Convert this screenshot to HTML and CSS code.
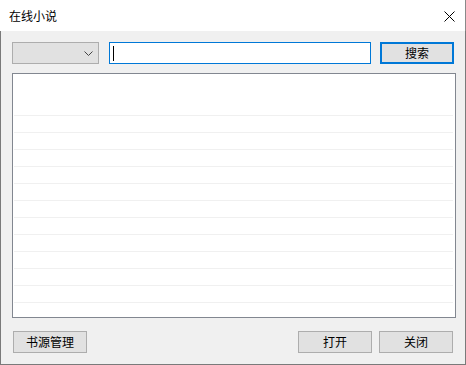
FILE: index.html
```html
<!DOCTYPE html>
<html lang="zh">
<head>
    <meta charset="UTF-8">
    <meta name="viewport" content="width=device-width, initial-scale=1.0">
    <title>在线小说</title>
    <link rel="stylesheet" href="styles.css">
</head>
<body>
    <div class="window">
        <div class="titlebar">
            <span class="title">在线小说</span>
            <span class="close">
                <svg width="11" height="11" viewBox="0 0 11 11">
                    <path d="M0.5 0.5 L10.5 10.5 M10.5 0.5 L0.5 10.5" stroke="#000" stroke-width="1" fill="none"/>
                </svg>
            </span>
        </div>

        <div class="client">
            <div class="search-row">
                <div class="combo">
                    <svg width="9" height="5" viewBox="0 0 9 5">
                        <path d="M0.5 0.5 L4.5 4.5 L8.5 0.5" stroke="#444" stroke-width="1" fill="none"/>
                    </svg>
                </div>
                <div class="input"><span class="caret"></span></div>
                <button class="btn btn-default search-btn">搜索</button>
            </div>

            <div class="list">
                <div class="list-top"></div>
                <div class="row"></div>
                <div class="row"></div>
                <div class="row"></div>
                <div class="row"></div>
                <div class="row"></div>
                <div class="row"></div>
                <div class="row"></div>
                <div class="row"></div>
                <div class="row"></div>
                <div class="row"></div>
                <div class="row"></div>
                <div class="row"></div>
            </div>

            <div class="bottom-row">
                <button class="btn source-btn">书源管理</button>
                <div class="spacer"></div>
                <button class="btn">打开</button>
                <button class="btn close-btn">关闭</button>
            </div>
        </div>
    </div>
</body>
</html>
```

FILE: styles.css
```css
body {
    margin: 0;
    font-family: "Noto Sans CJK SC", "Noto Sans", sans-serif;
    font-size: 12px;
    color: #000;
}

.window {
    width: 466px;
    height: 365px;
    box-sizing: border-box;
    background-color: #fff;
    display: flex;
    flex-direction: column;
}

.titlebar {
    height: 31px;
    display: flex;
    align-items: center;
    padding-left: 9px;
    border-right: 1px solid #8a8a8a;
}

.title {
    flex: 1;
    line-height: 14px;
}

.close {
    width: 11px;
    height: 11px;
    margin-right: 10px;
    margin-top: 1px;
}

.close svg {
    display: block;
}

.client {
    flex: 1;
    background-color: #f0f0f0;
    border: 1px solid #7a7a7a;
    border-top: none;
    padding: 11px 10px 0 11px;
}

.search-row {
    display: flex;
    height: 22px;
}

.combo {
    width: 87px;
    box-sizing: border-box;
    border: 1px solid #adadad;
    background-color: #e1e1e1;
    display: flex;
    align-items: center;
    justify-content: flex-end;
    padding-right: 5px;
}

.combo svg {
    display: block;
}

.input {
    width: 262px;
    margin-left: 10px;
    box-sizing: border-box;
    border: 1px solid #0078d7;
    background-color: #fff;
    padding: 3px 0 0 3px;
}

.caret {
    display: block;
    width: 1px;
    height: 15px;
    background-color: #000;
}

.btn {
    width: 74px;
    height: 22px;
    box-sizing: border-box;
    border: 1px solid #adadad;
    background-color: #e1e1e1;
    font-family: inherit;
    font-size: 12px;
    color: #000;
    padding: 0;
    line-height: 18px;
}

.btn-default {
    border: 2px solid #0078d7;
}

.search-btn {
    margin-left: 9px;
}

.list {
    margin-top: 9px;
    width: 444px;
    height: 245px;
    box-sizing: border-box;
    border: 1px solid #828790;
    background-color: #fff;
    overflow: hidden;
}

.list-top {
    height: 41px;
}

.row {
    height: 16px;
    border-top: 1px solid #f0f0f0;
    margin: 0 2px 0 1px;
}

.bottom-row {
    display: flex;
    margin-top: 13px;
}

.source-btn {
    margin-left: 1px;
}

.spacer {
    flex: 1;
}

.close-btn {
    margin-left: 7px;
    margin-right: 2px;
}
```
